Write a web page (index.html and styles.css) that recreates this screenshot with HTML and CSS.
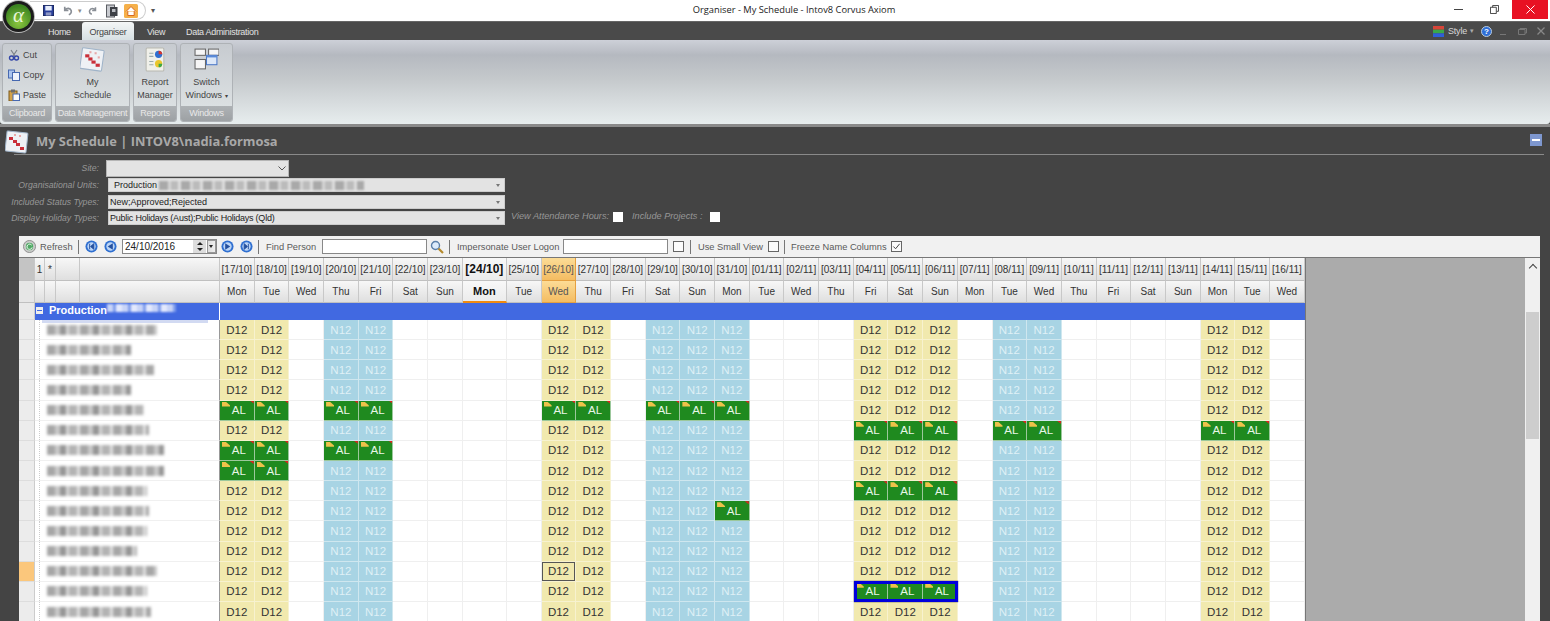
FILE: index.html
```html
<!DOCTYPE html>
<html lang="en">
<head>
<meta charset="utf-8">
<title>Organiser - My Schedule - Intov8 Corvus Axiom</title>
<link rel="stylesheet" href="styles.css">
</head>
<body>
<div class="logo"><span>α</span></div>
<header class="titlebar">
  <div class="qat">
    <svg class="qi q-save" viewBox="0 0 12 12"><rect x=".5" y=".5" width="11" height="11" fill="#2a3f9a" stroke="#16245f"/><rect x="2.5" y="1" width="7" height="5" fill="#e8eefc"/><rect x="3" y="8" width="6" height="3.5" fill="#8d97c4"/></svg>
    <svg class="qi q-undo" viewBox="0 0 12 12"><path d="M3 2v4h4M3.4 5.6C5 3 9 3 10 6c.6 2-.6 4-2.600 4.600" fill="none" stroke="#8a8f96" stroke-width="1.800"/></svg>
    <span class="qd">▾</span>
    <svg class="qi q-redo" viewBox="0 0 12 12"><path d="M9 2v4H5M8.600 5.600C7 3 3 3 2 6c-.6 2 .6 4 2.600 4.600" fill="none" stroke="#8a8f96" stroke-width="1.800"/></svg>
    <svg class="qi q-doc" viewBox="0 0 12 14"><rect x=".5" y="1" width="8" height="12" fill="#c9cbd0" stroke="#5a5d63"/><rect x="4" y="3" width="7.500" height="9" fill="#3d4046"/><rect x="6" y="5" width="3.500" height="3" fill="#b9bcc2"/></svg>
    <svg class="qi q-home" viewBox="0 0 14 14"><rect width="14" height="14" rx="1.500" fill="#f5b04a"/><path d="M2 7.500 7 2.500l5 5M3.800 7v4.500h6.400V7" fill="#fff" stroke="#d8691c"/></svg>
  </div>
  <span class="qmore">▾</span>
  <div class="wintitle">Organiser - My Schedule - Intov8 Corvus Axiom</div>
  <div class="winbtns">
    <span class="wb"><i class="wmin"></i></span>
    <span class="wb"><svg class="wres" viewBox="0 0 10 10"><path d="M3 2.500V.500h6.500V7H7.500M.500 2.500H7V9.500H.500Z" fill="none" stroke="#333"/></svg></span>
    <span class="wb wclose"><svg class="wx" viewBox="0 0 10 10"><path d="M.500.500l9 9M9.500.500l-9 9" stroke="#fff" stroke-width="1.100"/></svg></span>
  </div>
</header>

<nav class="tabbar">
  <span class="tab t-home">Home</span>
  <span class="tab t-org">Organiser</span>
  <span class="tab t-view">View</span>
  <span class="tab t-data">Data Administration</span>
  <div class="tabright">
    <svg class="stylei" viewBox="0 0 12 12"><rect width="12" height="4" fill="#d8453a"/><rect y="4" width="12" height="4" fill="#3aa84a"/><rect y="8" width="12" height="4" fill="#2f5fd8"/></svg>
    <span class="styletx">Style</span><span class="stylearr">▾</span>
    <span class="help">?</span>
    <i class="mdi m-min"></i>
    <svg class="mdi-res" viewBox="0 0 9 7"><path d="M2 1.500V.500h6.500V5H7M.500 1.500H7V6.500H.500Z" fill="none" stroke="#777"/></svg>
    <svg class="mdi-x" viewBox="0 0 8 8"><path d="M.500.500l7 7M7.500.500l-7 7" stroke="#888" stroke-width="1.300"/></svg>
  </div>
</nav>

<section class="ribbon">
  <div class="rgroup g-clip">
    <div class="rbody clip">
      <div class="citem"><svg class="ci" viewBox="0 0 12 12"><path d="M3 1l4 6M9 1 5 7" stroke="#7c8088" stroke-width="1.200"/><circle cx="3.500" cy="9" r="2" fill="none" stroke="#3346a8" stroke-width="1.400"/><circle cx="8.500" cy="9" r="2" fill="none" stroke="#3346a8" stroke-width="1.400"/></svg>Cut</div>
      <div class="citem"><svg class="ci" viewBox="0 0 12 12"><rect x=".5" y="1" width="6" height="8" fill="#a9c3ee" stroke="#4668b0"/><rect x="4.500" y="3.500" width="7" height="8" fill="#eef3fc" stroke="#4668b0"/></svg>Copy</div>
      <div class="citem"><svg class="ci" viewBox="0 0 12 12"><rect x="1" y="2" width="8" height="10" fill="#d3a24a" stroke="#7d5a1c"/><rect x="3" y=".5" width="4" height="3" fill="#6c6c6c"/><rect x="5" y="5" width="6.500" height="6.500" fill="#fbfbfb" stroke="#4668b0"/></svg>Paste</div>
    </div>
    <div class="rlabel">Clipboard</div>
  </div>
  <div class="rgroup g-data">
    <div class="rbody big">
      <svg class="bi" viewBox="0 0 24 24"><rect x="1" y="2" width="21" height="20" rx="1" transform="rotate(8 12 12)" fill="#eef1f5" stroke="#9fb3c8"/><g fill="#c92f3a"><rect x="5" y="7" width="4" height="3"/><rect x="8" y="10" width="4" height="3"/><rect x="11" y="13" width="4" height="3"/><rect x="15" y="16" width="4" height="3"/></g><g fill="#e7a8a8"><rect x="9" y="4" width="2" height="2"/><rect x="14" y="5" width="2" height="2"/><rect x="17" y="9" width="2" height="2"/></g></svg>
      <span>My<br>Schedule</span>
    </div>
    <div class="rlabel">Data Management</div>
  </div>
  <div class="rgroup g-rep">
    <div class="rbody big">
      <svg class="bi" viewBox="0 0 24 24"><rect x="3" y="1" width="17" height="22" rx="1" fill="#f0f0ea" stroke="#b8b8b0"/><circle cx="15" cy="7" r="3.500" fill="#2f6fd0"/><path d="M15 7V3.500A3.500 3.500 0 0 1 18.500 7Z" fill="#d8352c"/><circle cx="15" cy="16" r="3.500" fill="#e9c62c"/><path d="M15 16h3.500A3.500 3.500 0 0 1 15 19.500Z" fill="#3aa84a"/><path d="M6 6h4M6 9h4M6 14h4M6 17h4" stroke="#9aa"/></svg>
      <span>Report<br>Manager</span>
    </div>
    <div class="rlabel">Reports</div>
  </div>
  <div class="rgroup g-win">
    <div class="rbody big">
      <svg class="bi" viewBox="0 0 24 24"><rect x="1" y="2" width="10" height="6" fill="#f6f6f6" stroke="#666"/><rect x="14" y="2" width="10" height="6" fill="#f6f6f6" stroke="#666"/><rect x="1" y="12" width="10" height="9" fill="#f6f6f6" stroke="#666"/><rect x="12" y="8" width="10" height="9" fill="#dde8f8" stroke="#4a78c8"/><rect x="12" y="8" width="10" height="2" fill="#5a8ad8"/></svg>
      <span>Switch<br>Windows <b class="caret">▾</b></span>
    </div>
    <div class="rlabel">Windows</div>
  </div>
</section>
<div class="ribbon-gap"></div>

<main class="content">
  <div class="schedhead">
    <svg class="schedicon" viewBox="0 0 24 24"><rect x="1" y="2" width="21" height="20" rx="1" transform="rotate(6 12 12)" fill="#eef1f5" stroke="#9fb3c8"/><g fill="#c92f3a"><rect x="4" y="7" width="4" height="3"/><rect x="8" y="10" width="4" height="3"/><rect x="11" y="13" width="4" height="3"/><rect x="15" y="17" width="4" height="3"/></g><g fill="#e7a8a8"><rect x="9" y="4" width="2" height="2"/><rect x="14" y="5" width="2" height="2"/></g></svg>
    <h1>My Schedule | INTOV8\nadia.formosa</h1>
    <span class="collapse"><i></i></span>
  </div>
  <form class="filters">
    <div class="frow f-site"><label>Site:</label><div class="combo c-site"><svg viewBox="0 0 8 5"><path d="M.500.500 4 4 7.500.500" fill="none" stroke="#555"/></svg></div></div>
    <div class="frow f-org"><label>Organisational Units:</label><div class="combo c-wide"><span class="ind">Production</span><span class="smear s-org"></span><span class="arr"></span></div></div>
    <div class="frow f-stat"><label>Included Status Types:</label><div class="combo c-wide"><span class="tx-new">New;Approved;Rejected</span><span class="arr"></span></div></div>
    <div class="frow f-hol"><label>Display Holiday Types:</label><div class="combo c-wide"><span class="tx-hol">Public Holidays (Aust);Public Holidays (Qld)</span><span class="arr"></span></div>
      <label class="lab2 l-att">View Attendance Hours:</label><i class="cb cb-a"></i>
      <label class="lab2 l-proj">Include Projects :</label><i class="cb cb-b"></i>
    </div>
  </form>

  <div class="toolbar">
    <svg class="ti t-ref" viewBox="0 0 14 14"><circle cx="7" cy="7" r="6.500" fill="#c9cbc9" stroke="#8a8a8a"/><circle cx="7" cy="7" r="4" fill="#4fa964"/><path d="M9.300 5.500A2.800 2.800 0 1 0 9.800 8" fill="none" stroke="#fff"/></svg>
    <span class="tt tt-ref">Refresh</span><i class="sep s1"></i>
    <svg class="ti nav n1" viewBox="0 0 14 14"><circle cx="7" cy="7" r="6.500" fill="#2f6fd0"/><circle cx="7" cy="7" r="4.500" fill="#bcd5f6"/><path d="M9.500 4v6L6 7ZM5 4v6" fill="#24509f" stroke="#24509f"/></svg>
    <svg class="ti nav n2" viewBox="0 0 14 14"><circle cx="7" cy="7" r="6.500" fill="#2f6fd0"/><circle cx="7" cy="7" r="4.500" fill="#bcd5f6"/><path d="M9.500 3.500v7L4 7Z" fill="#24509f"/></svg>
    <div class="date"><span>24/10/2016</span><span class="spin"><b class="up"></b><b class="dn"></b></span><span class="dd"></span></div>
    <svg class="ti nav n3" viewBox="0 0 14 14"><circle cx="7" cy="7" r="6.500" fill="#2f6fd0"/><circle cx="7" cy="7" r="4.500" fill="#bcd5f6"/><path d="M4.500 3.500v7L10 7Z" fill="#24509f"/></svg>
    <svg class="ti nav n4" viewBox="0 0 14 14"><circle cx="7" cy="7" r="6.500" fill="#2f6fd0"/><circle cx="7" cy="7" r="4.500" fill="#bcd5f6"/><path d="M4.500 4v6L8 7ZM9 4v6" fill="#24509f" stroke="#24509f"/></svg>
    <i class="sep s2"></i>
    <span class="tt tt-find">Find Person</span>
    <i class="tinput i-find"></i>
    <svg class="ti t-search" viewBox="0 0 14 14"><circle cx="5.500" cy="5.500" r="4" fill="#dcebfb" stroke="#5b7fa8" stroke-width="1.400"/><path d="M8.500 8.500l4.500 4.500" stroke="#b58a2c" stroke-width="2.200"/></svg>
    <i class="sep s3"></i>
    <span class="tt tt-imp">Impersonate User Logon</span>
    <i class="tinput i-imp"></i>
    <i class="tcb c1"></i>
    <i class="sep s4"></i>
    <span class="tt tt-small">Use Small View</span>
    <i class="tcb c2"></i>
    <i class="sep s5"></i>
    <span class="tt tt-frz">Freeze Name Columns</span>
    <span class="tcb c3"><svg viewBox="0 0 10 10"><path d="M1.500 5l2.500 2.500 4.500-5.500" fill="none" stroke="#444" stroke-width="1.100"/></svg></span>
  </div>

  <div class="gridwrap">
    <div class="grid" id="grid"></div>
    <div class="filler"></div>
    <div class="scroll"><span class="sup"></span><span class="thumb"></span></div>
  </div>
</main>
<script src="script.js"></script>
</body>
</html>
```
FILE: styles.css
```css
* { box-sizing: border-box; }
html, body { margin: 0; height: 621px; overflow: hidden; }
body { background: #444; font-family: "Liberation Sans", Arial, sans-serif; font-size: 10px; color: #333; position: relative; width: 1550px; }

.logo { position: absolute; left: 3px; top: 1px; width: 31px; height: 31px; border-radius: 50%; background: #1c1c1c; box-shadow: 0 0 0 1px #bbb; display: flex; align-items: center; justify-content: center; z-index: 5; }
.logo span { width: 25px; height: 25px; border-radius: 50%; background: radial-gradient(circle at 50% 75%, #8cc63f, #3c8420 75%); color: #e8f5d8; font: italic 21px/23px "Liberation Serif", serif; text-align: center; }

.titlebar { height: 21px; background: #fff; display: flex; align-items: flex-start; position: relative; }
.qat { margin-left: 30px; margin-top: 1px; width: 116px; height: 19px; border: 1px solid #ccc; border-left: 0; border-radius: 0 10px 10px 0; display: flex; align-items: center; }
.qi { display: block; }
.q-save { width: 11px; height: 11px; margin-left: 13px; }
.q-undo { width: 11px; height: 11px; margin-left: 8px; }
.qd { font-size: 7px; color: #888; margin-left: 5px; }
.q-redo { width: 10px; height: 11px; margin-left: 6px; }
.q-doc { width: 12px; height: 14px; margin-left: 8px; }
.q-home { width: 14px; height: 14px; margin-left: 6px; }
.qmore { font-size: 8px; color: #555; margin: 6px 0 0 5px; }
.wintitle { position: absolute; left: 0; right: 0; top: 3px; text-align: center; font: 9.300px "Open Sans", sans-serif; color: #222; padding-left: 38px; }
.winbtns { margin-left: auto; margin-right: 2px; display: flex; }
.wb { width: 36px; height: 19px; display: flex; align-items: center; justify-content: center; }
.wmin { width: 9px; height: 1px; background: #444; }
.wres { width: 9px; height: 9px; }
.wclose { background: #e81123; }
.wx { width: 9px; height: 9px; }

.tabbar { height: 19px; background: #4a4a4a; display: flex; position: relative; border-top: 1px solid #666; }
.tab { color: #e2e2e2; font-size: 9px; line-height: 20px; white-space: nowrap; letter-spacing: -.3px; }
.t-home { margin-left: 48px; width: 34px; }
.t-org { width: 52px; margin-right: 13px; background: linear-gradient(#f4f6f6, #d7e0e3); color: #444; border-radius: 3px 3px 0 0; text-align: center; }
.t-view { width: 39px; }
.t-data { width: 80px; }
.tabright { margin-left: auto; display: flex; align-items: center; }
.stylei { width: 11px; height: 11px; }
.styletx { color: #d8d8d8; font-size: 9px; margin-left: 4px; letter-spacing: -.2px; }
.stylearr { color: #aaa; font-size: 7px; margin-left: 3px; }
.help { width: 11px; height: 11px; border-radius: 50%; background: #2f6fd8; border: 1px solid #bcd; color: #fff; font: bold 8px/9px "Liberation Sans", sans-serif; text-align: center; margin-left: 7px; }
.m-min { width: 6px; height: 1px; background: #777; margin: 6px 0 0 8px; }
.mdi-res { width: 9px; height: 7px; margin-left: 12px; }
.mdi-x { width: 8px; height: 8px; margin: 0 5px 0 10px; }

.ribbon { height: 84px; background: linear-gradient(#cdd0d8 0, #b5b9c0 15px, #c4c8cb 45%, #e7edee 100%); display: flex; padding: 3px 0 2px 2px; gap: 3px; border-radius: 0 0 3px 3px; }
.rgroup { display: flex; flex-direction: column; border: 1px solid #aeb2b6; border-radius: 3px; background: linear-gradient(#c7cbd0, #e0e5e6); overflow: hidden; }
.g-clip { width: 50px; }
.g-data { width: 75px; }
.g-rep { width: 44px; }
.g-win { width: 53px; }
.rbody { flex: 1; color: #444; font-size: 9px; }
.big { display: flex; flex-direction: column; align-items: center; text-align: center; line-height: 13px; padding-top: 3px; }
.bi { width: 25px; height: 25px; margin-bottom: 4px; }
.caret { font-size: 6px; font-weight: normal; }
.clip { display: flex; flex-direction: column; gap: 6px; padding: 4px 0 0 5px; }
.citem { display: flex; align-items: center; height: 14px; gap: 3px; }
.ci { width: 12px; height: 12px; flex: none; }
.rlabel { height: 15px; background: linear-gradient(#aeb2b5, #9da1a4); color: #e8e8e8; font-size: 9px; line-height: 15px; text-align: center; white-space: nowrap; letter-spacing: -.3px; }
.ribbon-gap { height: 3px; background: #8a8a8a; }

.content { height: 494px; background: #444; overflow: hidden; display: flex; flex-direction: column; }
.schedhead { height: 28px; margin: 0 6px 0 14px; border-bottom: 1px solid #8a8a8a; display: flex; align-items: center; position: relative; flex: none; }
.schedicon { position: absolute; left: -9px; top: 3px; width: 24px; height: 24px; }
.schedhead h1 { margin: 0 0 0 22px; font: bold 12.900px "Open Sans", sans-serif; color: #a8a8a8; }
.collapse { margin-left: auto; width: 12px; height: 12px; background: #7e97cf; display: flex; align-items: center; justify-content: center; margin-right: 2px; margin-top: -2px; }
.collapse i { width: 8px; height: 2px; background: #fff; }

.filters { height: 81px; padding-top: 4px; flex: none; margin: 0; }
.frow { display: flex; align-items: center; position: relative; }
.frow > label:first-child { width: 99px; text-align: right; font-style: italic; color: #979797; font-size: 8.700px; white-space: nowrap; flex: none; }
.f-site { height: 18px; }
.f-org, .f-stat, .f-hol { height: 14px; margin-top: 2.500px; }
.f-org { margin-top: 1px; }
.combo { background: #e3e3e3; color: #222; font-size: 9px; display: flex; align-items: center; position: relative; white-space: nowrap; }
.c-site { margin-left: 7px; width: 183px; height: 17px; border: 1px solid #b5b5b5; }
.c-site svg { position: absolute; right: 2px; top: 5px; width: 8px; height: 5px; }
.c-wide { margin-left: 9px; width: 397px; height: 14px; padding-left: 1px; border: 1px solid #ccc; }
.tx-new { font-size: 9px; }
.tx-hol { letter-spacing: -.23px; }
.ind { margin-left: 4px; }
.arr { position: absolute; right: 4px; top: 5px; border: 2px solid transparent; border-top: 3px solid #777; border-bottom: 0; }
.smear { height: 9px; margin-left: 2px; filter: blur(1.200px); }
.s-org { width: 205px; background: repeating-linear-gradient(90deg, #a9a9a9 0 9px, #d5d5d5 9px 12px, #bbb 12px 19px, #dedede 19px 22px); }
.lab2 { color: #979797; font-style: italic; font-size: 9.200px; white-space: nowrap; position: absolute; top: 0; }
.l-att { left: 511px; }
.l-proj { left: 632px; }
.cb { position: absolute; top: 1px; width: 10px; height: 10px; background: #fff; }
.cb-a { left: 613px; }
.cb-b { left: 710px; }

.toolbar { margin: 0 10px 0 19px; height: 21px; background: #f1f1f1; display: flex; align-items: center; position: relative; flex: none; }
.ti { display: block; flex: none; }
.t-ref { width: 13px; height: 13px; margin-left: 4px; }
.tt { color: #5a5a5a; font-size: 9.300px; white-space: nowrap; flex: none; }
.tt-ref { margin-left: 4px; width: 34px; }
.sep { width: 1px; height: 14px; background: #777; flex: none; }
.s1 { margin-left: 4px; }
.nav { width: 13px; height: 13px; }
.n1 { margin-left: 6px; }
.n2 { margin-left: 6px; }
.date { margin-left: 5px; width: 95px; height: 15px; border: 1px solid #888; background: #fff; color: #222; display: flex; align-items: center; padding-left: 2px; flex: none; font-size: 10px; }
.spin { margin-left: auto; width: 13px; height: 13px; background: #ddd; display: flex; flex-direction: column; align-items: center; justify-content: space-around; }
.up { border: 3px solid transparent; border-bottom: 3px solid #222; border-top: 0; }
.dn { border: 3px solid transparent; border-top: 3px solid #222; border-bottom: 0; }
.dd { width: 9px; height: 13px; margin-left: 1px; background: linear-gradient(90deg, #ddd, #eee); position: relative; border: 1px solid #999; }
.dd::after { content: ""; position: absolute; left: 1px; top: 4px; border: 2.500px solid transparent; border-top: 3px solid #222; border-bottom: 0; }
.n3 { margin-left: 4px; }
.n4 { margin-left: 6px; }
.s2 { margin-left: 5px; }
.tt-find { margin-left: 7px; width: 48px; }
.tinput { width: 105px; height: 15px; background: #fff; border: 1px solid #888; flex: none; }
.i-find { margin-left: 8px; }
.t-search { width: 14px; height: 14px; margin-left: 3px; }
.s3 { margin-left: 5px; }
.tt-imp { margin-left: 7px; width: 98px; }
.i-imp { margin-left: 8px; }
.tcb { width: 11px; height: 11px; border: 1px solid #666; background: #fbfbfb; flex: none; display: block; }
.tcb svg { display: block; width: 9px; height: 9px; }
.c1 { margin-left: 5px; }
.s4 { margin-left: 6px; }
.tt-small { margin-left: 7px; width: 63px; }
.c2 { margin-left: 7px; }
.s5 { margin-left: 5px; }
.tt-frz { margin-left: 6px; width: 92px; }
.c3 { margin-left: 8px; }

.gridwrap { margin: 0 10px 0 19px; flex: 1; display: flex; min-height: 0; overflow: hidden; border-top: 1px solid #777; }
.grid { flex: none; display: grid; grid-template-columns: 16px 10px 11px 24px 140px repeat(7, 34.7px) 44.100px repeat(23, 34.7px); grid-template-rows: 23px 22px 17px repeat(15, 20.150px); background: #fff; color: #333; position: relative; }
.filler { flex: 1; background: #ababab; border-left: 1px solid #777; }
.scroll { width: 15px; background: #f0f0f0; display: flex; flex-direction: column; align-items: center; flex: none; }
.sup { width: 6px; height: 6px; border-left: 1.500px solid #444; border-top: 1.500px solid #444; transform: rotate(45deg); margin-top: 7px; }
.thumb { width: 13px; height: 127px; background: #cdcdcd; margin-top: 41px; }

.hc { background: linear-gradient(#f7f7f7, #dfdfdf); border-right: 1px solid #c8c8c8; border-bottom: 1px solid #c0c0c0; display: flex; align-items: center; justify-content: center; color: #333; font-size: 10px; white-space: nowrap; overflow: hidden; }
.hc.corner { background: #c4c4c4; }
.hc.rowh { background: #e6e6e6; }
.hc.today { font-weight: bold; color: #111; background: linear-gradient(#f8f8f8, #ececec); }
.hc.today.date0 { font-size: 12px; }
.hc.today.day0 { font-size: 11px; border-bottom: 2px solid #f08a10; }
.hc.sel { background: linear-gradient(#fcdc96, #f4bc62); border-color: #e5a040; color: #555; }
.grp-h { background: #e9e9e9; border-right: 1px solid #ccc; border-bottom: 1px solid #ddd; }
.grp { grid-column: 2 / span 4; background: #4169e1; color: #fff; font-weight: bold; font-size: 11px; display: flex; align-items: center; padding: 0 0 3px 1px; white-space: nowrap; border-right: 1px solid #fff; }
.grp-fill { background: #4169e1; grid-column: 6 / -1; }
.box { width: 7px; height: 7px; background: #eee; margin-right: 6px; position: relative; flex: none; }
.box::after { content: ""; position: absolute; left: 1px; right: 1px; top: 3px; height: 1px; background: #4169e1; }
.smear2 { width: 69px; height: 8px; margin-top: -4px; background: repeating-linear-gradient(90deg, #c8d4f8 0 6px, #7f9cec 6px 9px, #e3e9fd 9px 15px); filter: blur(1px); }
.rh { background: #ececec; border-right: 1px solid #ccc; border-bottom: 1px solid #ddd; }
.rh.on { background: #fbc77c; }
.name { grid-column: 2 / span 4; background: #fff; border-right: 1px solid #999; border-bottom: 1px solid #f0f0f0; display: flex; align-items: center; padding-left: 12px; position: relative; }
.name::before { content: ""; position: absolute; left: 4px; top: 0; bottom: 0; border-left: 1px dotted #ccc; }
.first::after { content: ""; position: absolute; left: 7px; width: 166px; top: 0; height: 3px; background: #d2daf2; }
.blur { display: block; height: 10px; filter: blur(1.700px); background: repeating-linear-gradient(90deg, #a6a6a6 0 8px, #c9c9c9 8px 13px, #959595 13px 19px, #d8d8d8 19px 22px, #b3b3b3 22px 30px, #e2e2e2 30px 33px); }
.c { display: flex; align-items: center; justify-content: center; font-size: 11.500px; border-right: 1px solid #efefef; border-bottom: 1px solid #efefef; position: relative; min-width: 0; }
.d { background: #f1e9ae; color: #333; border-color: #f7f2cf; }
.n { background: #a8d4e4; color: #dff0f6; border-color: #cfe7ef; }
.al { background: #1f8a1f; color: #e8f6e8; border-color: #9cc89c; padding-left: 4px; }
.al::before { content: ""; position: absolute; left: 2px; top: 1px; width: 8px; height: 5px; background: #eec24a; clip-path: polygon(0 0, 45% 0, 100% 75%, 100% 100%, 0 100%); }
.al::after { content: ""; position: absolute; right: 0; top: 0; width: 4px; height: 3px; background: #e02020; clip-path: polygon(0 0, 100% 0, 100% 100%); }
.cur { box-shadow: inset 0 0 0 1px #555; }
.blue { position: absolute; left: 0; top: -1px; width: 104px; height: 21px; border: 3px solid #0000dc; box-shadow: 0 0 1px #000; z-index: 2; }
```
FILE: script.js
```js
var grid = document.getElementById('grid');
function add(cls, text) {
  var e = document.createElement('div');
  e.className = cls;
  if (text) e.textContent = text;
  grid.appendChild(e);
  return e;
}
var dates = [];
for (var i = 17; i <= 31; i++) dates.push(i + '/10');
for (i = 1; i <= 16; i++) dates.push((i < 10 ? '0' : '') + i + '/11');
var names = ['Mon', 'Tue', 'Wed', 'Thu', 'Fri', 'Sat', 'Sun'];
var TODAY = 7, SEL = 9;

// header rows
add('hc corner'); add('hc', '1'); add('hc', '*'); add('hc'); add('hc');
dates.forEach(function (d, k) {
  add('hc' + (k === TODAY ? ' today date0' : '') + (k === SEL ? ' sel' : ''), '[' + d + ']');
});
add('hc rowh'); add('hc'); add('hc'); add('hc'); add('hc');
dates.forEach(function (d, k) {
  add('hc' + (k === TODAY ? ' today day0' : '') + (k === SEL ? ' sel' : ''), names[k % 7]);
});

// group row
add('grp-h');
var g = add('grp');
var box = document.createElement('span'); box.className = 'box'; g.appendChild(box);
g.appendChild(document.createTextNode('Production'));
var sm = document.createElement('span'); sm.className = 'smear2'; g.appendChild(sm);
add('grp-fill');

// rows
var D = [0, 1, 9, 10, 18, 19, 20, 28, 29], N = [3, 4, 12, 13, 14, 22, 23];
var AL = {
  4: [0, 1, 3, 4, 9, 10, 12, 13, 14],
  5: [18, 19, 20, 22, 23, 28, 29],
  6: [0, 1, 3, 4],
  7: [0, 1],
  8: [18, 19, 20],
  9: [14],
  13: [18, 19, 20]
};
var widths = [110, 84, 107, 84, 97, 102, 117, 117, 100, 102, 100, 90, 110, 100, 104];
for (var r = 0; r < 15; r++) {
  add('rh' + (r === 12 ? ' on' : ''));
  var nm = add('name' + (r === 0 ? ' first' : ''));
  var b = document.createElement('span');
  b.className = 'blur';
  b.style.width = widths[r] + 'px';
  nm.appendChild(b);
  for (var c = 0; c < 31; c++) {
    var al = AL[r] && AL[r].indexOf(c) >= 0;
    if (al) {
      var cell = add('c al', 'AL');
      if (r === 13 && c === 18) {
        var ov = document.createElement('div');
        ov.className = 'blue';
        cell.appendChild(ov);
      }
    }
    else if (D.indexOf(c) >= 0) add('c d' + (r === 12 && c === 9 ? ' cur' : ''), 'D12');
    else if (N.indexOf(c) >= 0) add('c n', 'N12');
    else add('c');
  }
}
```
